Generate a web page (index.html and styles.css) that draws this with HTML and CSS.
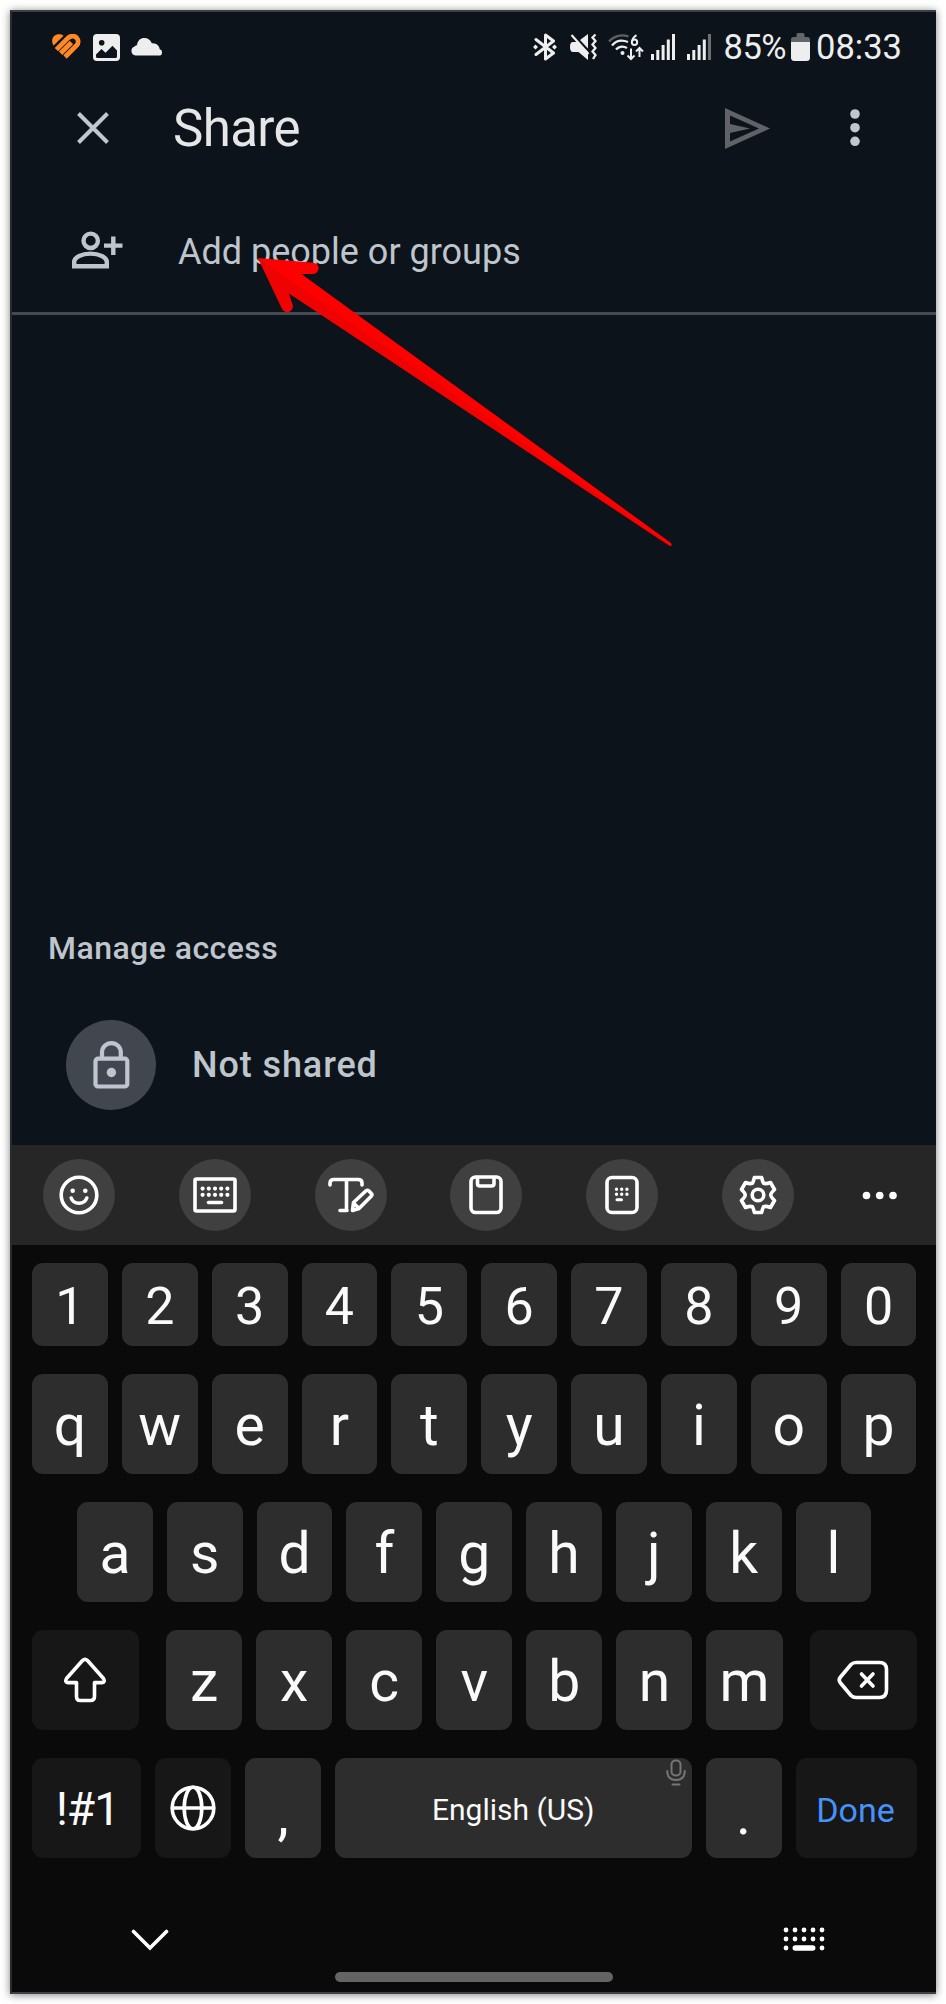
FILE: index.html
```html
<!DOCTYPE html>
<html lang="en">
<head>
<meta charset="utf-8">
<title>Share</title>
<link rel="stylesheet" href="styles.css">
</head>
<body>
<main class="phone">
  <header class="status">
    <div class="status-left">
      <svg class="ic-heart" width="30" height="26" viewBox="51 35 30 26"><g fill="none" stroke="#ff8a24" stroke-linecap="butt"><path d="M53.6 46.4 63.600 36.800C60.500 34.600 56.400 34.900 54.200 37.100 51.600 39.600 51.600 43.400 53.600 46.400Z" fill="#ff8a24" stroke="none"/><path d="M56.400 50.600 67.600 39.400C71 36 74.600 36.800 76.600 38.800 78.600 41 78.700 44.200 76.600 46.400L65 58M60.600 54.300 71.400 43.500" stroke-width="4.800"/></g></svg>
      <svg width="27" height="27" viewBox="0 0 27 27"><rect width="27" height="27" rx="4" fill="#eee"/><circle cx="8.700" cy="8.700" r="2.800" fill="#0c131a"/><path d="M3 20.500 8.500 15 12.500 18.800 19.500 11.800 24 16.500V22.500Q24 24 22.500 24H4.500Q3 24 3 22.500Z" fill="#0c131a"/></svg>
      <svg class="ic-cloud" width="32" height="18" viewBox="0 0 32 18"><path d="M4.500 17.500A4.700 4.700 0 0 1 3.600 8.400Q5 7 6 7.200C6.400 2.600 9.500 0 13.300 0 17 0 19.500 2 20.800 5.300 25.500 4.800 28.500 8 28.700 11.300A3.200 3.200 0 0 1 28.700 17.500Z" fill="#eee"/></svg>
    </div>
    <div class="status-right">
      <svg width="24" height="28" viewBox="0 0 24 28"><g fill="none" stroke="#eee" stroke-width="3" stroke-linejoin="round" stroke-linecap="round"><path d="M3 6.500 20.500 20 12.500 26V2L20.500 8 3 21.500"/></g><path d="M0 14l2.500-2.500L5 14l-2.500 2.500zM19 14l2.500-2.500L24 14l-2.500 2.500z" fill="#eee"/></svg>
      <svg class="ic-mute" width="28" height="28" viewBox="0 0 28 28"><path d="M1 14q0-5 3-5h4l11 10v8L9.500 19H4q-3 0-3-5ZM11 7l8-6v14.500Z" fill="#eee"/><path d="M2.500 2 19.500 21" stroke="#eee" stroke-width="2.200"/><path d="M26.500 1.500 23.500 4.500 26.500 8 23.500 11.500 26.500 15 23.500 18.500 26.500 22 24 26" fill="none" stroke="#eee" stroke-width="2.300"/></svg>
      <svg class="ic-wifi" width="36" height="28" viewBox="0 0 36 28"><g fill="none" stroke="#eee" stroke-width="2.300"><path d="M1 8.500C6 2.500 14 1 20.500 3.500" stroke="#5d6166"/><path d="M4 12.500C8 7.600 14 6.500 20 9M8 16.500C11 13 15.500 13 19 15"/><path d="M23 15.500V26M19.500 22.500 23 26 26.500 22.500M31.500 24V14.800M28 18.500 31.500 15 35 18.500" stroke-width="2"/><path d="M28.500 2.200Q24.500 4.500 24 9" stroke-width="2"/><circle cx="26.500" cy="9.300" r="2.700" stroke-width="2"/></g><circle cx="14.500" cy="20" r="2" fill="#eee"/></svg>
      <svg class="ic-signal" width="25" height="27" viewBox="0 0 25 27"><path d="M0 20h3v6H0zM5.300 16h3v10h-3zM10.600 11h3v15h-3zM15.800 5.500h3V26h-3zM21 0h3v26h-3z" fill="#eee"/></svg>
      <svg class="ic-signal2" width="25" height="27" viewBox="0 0 25 27"><path d="M0 20h3v6H0zM5.300 16h3v10h-3zM10.600 11h3v15h-3zM15.800 5.500h3V26h-3z" fill="#eee"/><path d="M21 0h3v26h-3z" fill="#6b6e72"/></svg>
      <span class="percent">85%</span>
      <svg class="ic-battery" width="19" height="28" viewBox="0 0 19 28"><path d="M0 10V6.500Q0 4 2.500 4H5.500V1.500Q5.500 0 7 0H12Q13.500 0 13.500 1.500V4H16.500Q19 4 19 6.500V10Z" fill="#63666b"/><path d="M0 9H19V24.500Q19 28 15.500 28H3.500Q0 28 0 24.500Z" fill="#eee"/></svg>
      <span class="clock">08:33</span>
    </div>
  </header>

  <div class="appbar">
    <svg class="close" width="34" height="34" viewBox="0 0 34 34"><path d="M2.500 2.500 31.500 31.500M31.500 2.500 2.500 31.500" stroke="#c2c7ce" stroke-width="4"/></svg>
    <h1>Share</h1>
    <svg class="send" width="45" height="41" viewBox="0 0 45 41"><path fill-rule="evenodd" d="M0 0 45 20.500 0 41ZM5 7.500V16L25 20.500 5 25V33.500L34 20.500Z" fill="#5f6368"/></svg>
    <svg class="more" width="10" height="38" viewBox="0 0 10 38"><g fill="#c2c7ce"><circle cx="5" cy="5" r="4.800"/><circle cx="5" cy="18.700" r="4.800"/><circle cx="5" cy="32.300" r="4.800"/></g></svg>
  </div>

  <div class="field">
    <svg width="51" height="38" viewBox="0 0 51 38"><g fill="none" stroke="#bfc5cc" stroke-width="4.400"><circle cx="18.700" cy="9.800" r="7.200"/><path d="M2.200 35.300V31C2.200 26 10 22.600 18.500 22.600S34.800 26 34.800 31V35.300Z"/><path d="M41.300 5.500V24M32 14.600H50.500"/></g></svg>
    <span>Add people or groups</span>
  </div>

  <section class="access">
    <h2>Manage access</h2>
    <div class="access-row">
      <div class="lock"><svg width="37" height="48" viewBox="0 0 37 48"><g fill="none" stroke="#bfc5d0" stroke-width="4.200"><rect x="2.500" y="17.700" width="31.800" height="27.800" rx="2.500"/><path d="M9 17.500V11.500A9.400 9.400 0 0 1 27.800 11.500V17.500"/></g><circle cx="18.400" cy="31.500" r="4.700" fill="#bfc5d0"/></svg></div>
      <span>Not shared</span>
    </div>
  </section>

  <div class="tools">
    <div class="tool"><svg width="40" height="40" viewBox="0 0 40 40"><g class="ln"><circle cx="20" cy="20" r="17.800"/><path d="M12.200 23Q14 28.200 20 28.200T27.800 23"/></g><circle cx="13.700" cy="15.800" r="2.300" fill="#fff"/><circle cx="26.300" cy="15.800" r="2.300" fill="#fff"/></svg></div>
    <div class="tool"><svg width="44" height="36" viewBox="0 0 44 36"><g class="ln"><rect x="2" y="2" width="40" height="32" rx="1.500"/><path d="M15.500 25.500H28.500"/><path class="dots" d="M9.600 11.600h.01M15.800 11.600h.01M22 11.600h.01M28.200 11.600h.01M34.400 11.600h.01M9.600 17.800h.01M15.800 17.800h.01M22 17.800h.01M28.200 17.800h.01M34.400 17.800h.01"/></g></svg></div>
    <div class="tool"><svg width="46" height="36" viewBox="0 0 46 36"><g class="ln"><path d="M2 8V6Q2 2.500 6 2.500H30Q34 2.500 34 6V8M18.500 3V33.500M12 33.500H19M24.500 33.500 25.500 25.500 38 13.800Q39.500 12.600 41 14L43.500 16.700Q44.500 18 43.200 19.300L31 31.500ZM25.500 26 31 31.500"/></g></svg></div>
    <div class="tool"><svg width="34" height="40" viewBox="0 0 34 40"><g class="ln"><rect x="2" y="2" width="30" height="35.500" rx="4.500"/><path d="M8.500 2.500V8.500Q8.500 11 11 11H22.500Q25 11 25 8.500V2.500"/></g></svg></div>
    <div class="tool"><svg width="34" height="40" viewBox="0 0 34 40"><g class="ln"><rect x="2" y="2.500" width="30" height="35" rx="5"/><path d="M12 24.700H16.500" stroke-width="3"/><path class="dots small" d="M11.500 14.200h.01M16.700 14.200h.01M21.900 14.200h.01M11.500 19.200h.01M16.700 19.200h.01M21.900 19.200h.01" /></g></svg></div>
    <div class="tool"><svg width="40" height="40" viewBox="0 0 40 40"><g class="ln"><path d="M16.400 2.500H23.600Q24.600 6.500 25.500 8.300 28 9.200 32.500 7.500L36.500 14.500Q32.800 18 32.800 20T36.500 25.500L32.500 32.500Q28 30.800 25.500 31.700 24.600 33.500 23.600 37.500H16.400Q15.400 33.500 14.500 31.700 12 30.800 7.500 32.500L3.500 25.500Q7.200 22 7.200 20T3.500 14.500L7.500 7.500Q12 9.200 14.500 8.300 15.400 6.500 16.400 2.500Z"/><circle cx="20" cy="20" r="5.800"/></g></svg></div>
    <svg class="ellipsis" width="36" height="9" viewBox="0 0 36 9"><g fill="#fff"><circle cx="4.500" cy="4.500" r="3.800"/><circle cx="17.700" cy="4.500" r="3.800"/><circle cx="31" cy="4.500" r="3.800"/></g></svg>
  </div>

  <section class="keyboard">
    <div class="row digits"><b>1</b><b>2</b><b>3</b><b>4</b><b>5</b><b>6</b><b>7</b><b>8</b><b>9</b><b>0</b></div>
    <div class="row"><b>q</b><b>w</b><b>e</b><b>r</b><b>t</b><b>y</b><b>u</b><b>i</b><b>o</b><b>p</b></div>
    <div class="row home"><b>a</b><b>s</b><b>d</b><b>f</b><b>g</b><b>h</b><b>j</b><b>k</b><b>l</b></div>
    <div class="row lower">
      <b class="dark wide"><svg width="44" height="46" viewBox="0 0 44 46"><path class="ln" d="M19.500 3.500Q22 1.200 24.500 3.500L40.500 21.500Q42.500 25.200 39 25.600H31.500V39.500Q31.500 43.500 27.500 43.500H17Q13.500 43.500 13.500 39.500V25.600H5Q1.500 25.200 3.500 21.500Z"/></svg></b>
      <div class="letters"><b>z</b><b>x</b><b>c</b><b>v</b><b>b</b><b>n</b><b>m</b></div>
      <b class="dark wide"><svg width="52" height="40" viewBox="0 0 52 40"><g class="ln"><path d="M19 2.500H42.500Q49.500 2.500 49.500 9.500V30Q49.500 37.500 42.500 37.500H19Q16 37.500 14 35.500L3.500 23Q1 20 3.500 17L14 4.500Q16 2.500 19 2.500Z"/><path d="M24.500 14 36 26M36 14 24.500 26"/></g></svg></b>
    </div>
    <div class="row bottom">
      <b class="dark sym">!#1</b>
      <b class="dark globe"><svg width="46" height="46" viewBox="0 0 46 46"><g class="ln"><circle cx="23" cy="23" r="20.800"/><ellipse cx="23" cy="23" rx="8.800" ry="20.800"/><path d="M2.500 23H43.500"/></g></svg></b>
      <b class="punct">,</b>
      <b class="space">English (US)<svg class="mic" width="20" height="27" viewBox="0 0 20 27"><g fill="none" stroke="#767676" stroke-width="2" stroke-linecap="round"><rect x="5.500" y="1.500" width="9" height="15" rx="4"/><path d="M1.200 12Q1.500 21 10 21T18.800 12M6.500 25.500H13.500"/></g></svg></b>
      <b class="punct">.</b>
      <b class="dark done">Done</b>
    </div>
  </section>

  <footer class="nav">
    <div class="nav-icons">
      <svg width="38" height="22" viewBox="0 0 38 22"><path d="M2.500 2.500 19 19 35.500 2.500" fill="none" stroke="#fff" stroke-width="3.600" stroke-linecap="round"/></svg>
      <svg width="42" height="25" viewBox="0 0 42 25"><path d="M3 3h.01M12 3h.01M21 3h.01M30 3h.01M39 3h.01M3 12h.01M12 12h.01M21 12h.01M30 12h.01M39 12h.01M3 21h.01M39 21h.01" stroke="#fff" stroke-width="4.800" stroke-linecap="round"/><path d="M12.300 21H29.700" stroke="#fff" stroke-width="5.500" stroke-linecap="round"/></svg>
    </div>
    <div class="handle"></div>
  </footer>

  <svg class="arrow" width="416" height="292" viewBox="257 256 416 292">
    <path fill="#f00" d="M258 258 313 262.700A5.600 5.600 0 0 1 313 274H301.500L671 543Q673 546.500 669.500 545.800L288.500 293 292.300 304.500A5.500 5.500 0 0 1 282 308.500Z"/>
    <path fill="#ee0202" d="M258 258 400 357 560 469 669.500 545.800 288.500 293 292.300 304.500A5.500 5.500 0 0 1 282 308.500Z"/>
  </svg>
</main>
</body>
</html>
```
FILE: styles.css
```css
* { box-sizing: border-box; }
body {
  margin: 0;
  padding: 10px;
  background: #fff;
  font-family: Roboto, "Liberation Sans", sans-serif;
}
svg { display: block; flex: none; }
h1, h2 { margin: 0; font-weight: 400; }
b { font-weight: 400; }
.phone {
  position: relative;
  display: flex;
  flex-direction: column;
  width: 926px;
  height: 1984px;
  background: #0c131a;
  border: 2px solid #3e4043;
  border-left-color: #292b2d;
  border-right: 0;
  box-shadow: 0 1px 8px rgba(0, 0, 0, .5);
}
.ln {
  fill: none;
  stroke: #fff;
  stroke-width: 3.6;
  stroke-linecap: round;
  stroke-linejoin: round;
}
.dots { stroke-width: 4.2; }
.dots.small { stroke-width: 3.4; }

.status {
  display: flex;
  justify-content: space-between;
  height: 70px;
  padding: 0 34px 0 39px;
  color: #eee;
  font-size: 34.5px;
}
.status-left, .status-right { display: flex; align-items: center; }
.status-left { gap: 12px; }
.ic-cloud { margin-left: -1px; }
.ic-mute { margin-left: 12px; }
.ic-wifi { margin-left: 11px; }
.ic-signal { margin-left: 7px; }
.ic-signal2 { margin-left: 11px; }
.percent { margin-left: 12px; letter-spacing: -.5px; }
.ic-battery { margin: 0 6px 0 5px; }

.appbar {
  display: flex;
  align-items: center;
  height: 92px;
  padding: 0 76px 0 64px;
}
.appbar h1 {
  margin-left: 63px;
  color: #e6e6e6;
  font-size: 51px;
  letter-spacing: -.6px;
}
.send { margin-left: auto; }
.more { margin-left: 80px; }

.field {
  display: flex;
  align-items: center;
  height: 141px;
  padding: 13px 0 0 60px;
  border-bottom: 3px solid #454a52;
  color: #bfc5cc;
  font-size: 36px;
}
.field span { margin-left: 55px; padding-top: 4px; }

.access {
  margin-top: auto;
  height: 217px;
  padding-left: 36px;
  color: #bfc5cc;
}
.access h2 {
  height: 40px;
  font-size: 32px;
  font-weight: 500;
  line-height: 40px;
  letter-spacing: .45px;
}
.access-row {
  display: flex;
  align-items: center;
  margin-top: 52px;
  padding-left: 18px;
  gap: 36px;
  font-size: 36px;
  font-weight: 500;
  letter-spacing: .9px;
}
.lock {
  display: flex;
  align-items: center;
  justify-content: center;
  width: 90px;
  height: 90px;
  border-radius: 50%;
  background: #42474f;
}

.tools {
  display: flex;
  align-items: center;
  flex: none;
  gap: 63.7px;
  height: 100px;
  padding-left: 31.3px;
  background: #262626;
}
.tool {
  display: flex;
  align-items: center;
  justify-content: center;
  flex: none;
  width: 72px;
  height: 72px;
  border-radius: 50%;
  background: #404040;
}
.ellipsis { margin-left: 5px; }

.keyboard {
  display: flex;
  flex-direction: column;
  flex: none;
  gap: 28.4px;
  padding: 18.3px 19.5px 0 20px;
  background: #0a0a0a;
  color: #fafafa;
}
.row { display: flex; gap: 14px; height: 99.6px; }
.row b {
  display: flex;
  align-items: center;
  justify-content: center;
  flex: 1 1 0;
  min-width: 0;
  padding-top: 2px;
  border-radius: 11px;
  background: #2d2d2d;
  font-size: 57px;
}
.row.digits { height: 82.6px; }
.digits b { font-size: 52px; padding-top: 4px; }
.home { padding: 0 45px; }
.row.lower { gap: 27.5px; }
.letters { display: flex; flex: 1; gap: 14px; }
.row b.dark { background: #171717; padding-top: 0; }
.row b.wide { flex: 0 0 106.5px; }
.row b.sym { flex: 0 0 109px; padding: 1px 0 0 2px; font-size: 46px; letter-spacing: -1px; }
.row b.globe { flex: 0 0 76px; }
.row b.punct { flex: 0 0 76px; padding-top: 13px; }
.row b.space { position: relative; padding-top: 3px; font-size: 30px; }
.mic { position: absolute; top: 1px; right: 6px; }
.row b.done { flex: 0 0 121px; padding: 4px 1px 0 0; color: #4791fa; font-size: 34px; }

.nav {
  display: flex;
  flex-direction: column;
  align-items: center;
  justify-content: space-between;
  height: 134px;
  flex: none;
  padding: 69px 0 10px;
  background: #0a0a0a;
}
.nav-icons {
  display: flex;
  justify-content: space-between;
  align-items: center;
  width: 100%;
  padding: 0 111px 0 119px;
}
.handle { width: 278px; height: 10px; border-radius: 5px; background: #646464; }
.arrow { position: absolute; left: 245px; top: 244px; }
```
